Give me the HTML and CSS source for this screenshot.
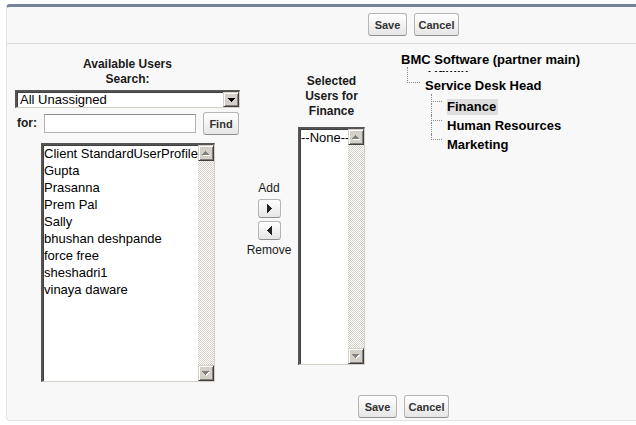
FILE: index.html
```html
<!DOCTYPE html>
<html>
<head>
<meta charset="utf-8">
<link rel="stylesheet" href="styles.css">
</head>
<body>
<div class="panel">
  <div class="bar bar--top">
    <button class="btn btn--save">Save</button>
    <button class="btn btn--cancel">Cancel</button>
  </div>

  <div class="main">
    <div class="col col--available">
      <div class="heading">Available Users<br>Search:</div>
      <div class="select inset">
        <span class="select__text">All Unassigned</span>
        <span class="sb-btn"><svg width="7" height="4" viewBox="0 0 7 4"><path d="M0 0h7v1h-1v1h-1v1h-1v1H3V3H2V2H1V1H0z" fill="#000"/></svg></span>
      </div>
      <div class="find-row">
        <span class="heading find-row__label">for:</span>
        <input class="text-input" type="text">
        <button class="btn btn--find">Find</button>
      </div>
      <div class="listbox listbox--available inset">
        <div class="listbox__items">
          <div class="listbox__item">Client StandardUserProfile</div>
          <div class="listbox__item">Gupta</div>
          <div class="listbox__item">Prasanna</div>
          <div class="listbox__item">Prem Pal</div>
          <div class="listbox__item">Sally</div>
          <div class="listbox__item">bhushan deshpande</div>
          <div class="listbox__item">force free</div>
          <div class="listbox__item">sheshadri1</div>
          <div class="listbox__item">vinaya daware</div>
        </div>
        <div class="scrollbar">
          <span class="sb-btn"><svg width="8" height="5" viewBox="0 0 8 5"><path transform="translate(1 1)" d="M3 0h1v1h1v1h1v1h1v1H0V3h1V2h1V1h1z" fill="#fff"/><path d="M3 0h1v1h1v1h1v1h1v1H0V3h1V2h1V1h1z" fill="#808080"/></svg></span>
          <span class="scrollbar__track"></span>
          <span class="sb-btn"><svg width="8" height="5" viewBox="0 0 8 5"><path transform="translate(1 1)" d="M0 0h7v1h-1v1h-1v1h-1v1H3V3H2V2H1V1H0z" fill="#fff"/><path d="M0 0h7v1h-1v1h-1v1h-1v1H3V3H2V2H1V1H0z" fill="#808080"/></svg></span>
        </div>
      </div>
    </div>

    <div class="col col--move">
      <div class="move-label">Add</div>
      <button class="btn btn--arrow"><svg width="5" height="9" viewBox="0 0 5 9"><path d="M0 0h1v1h1v1h1v1h1v1h1v1H4v1H3v1H2v1H1v1H0z" fill="#222"/></svg></button>
      <button class="btn btn--arrow"><svg width="5" height="9" viewBox="0 0 5 9"><path d="M5 0v9H4V8H3V7H2V6H1V5H0V4h1V3h1V2h1V1h1V0z" fill="#222"/></svg></button>
      <div class="move-label">Remove</div>
    </div>

    <div class="col col--selected">
      <div class="heading">Selected Users for Finance</div>
      <div class="listbox listbox--selected inset">
        <div class="listbox__items">
          <div class="listbox__item">--None--</div>
        </div>
        <div class="scrollbar">
          <span class="sb-btn"><svg width="8" height="5" viewBox="0 0 8 5"><path transform="translate(1 1)" d="M3 0h1v1h1v1h1v1h1v1H0V3h1V2h1V1h1z" fill="#fff"/><path d="M3 0h1v1h1v1h1v1h1v1H0V3h1V2h1V1h1z" fill="#808080"/></svg></span>
          <span class="scrollbar__track"></span>
          <span class="sb-btn"><svg width="8" height="5" viewBox="0 0 8 5"><path transform="translate(1 1)" d="M0 0h7v1h-1v1h-1v1h-1v1H3V3H2V2H1V1H0z" fill="#fff"/><path d="M0 0h7v1h-1v1h-1v1h-1v1H3V3H2V2H1V1H0z" fill="#808080"/></svg></span>
        </div>
      </div>
    </div>

    <div class="col col--tree">
      <ul class="tree">
        <li class="tree__root">
          <span class="tree__label tree__label--root">BMC Software (partner main)</span>
          <ul class="tree__children tree__children--l1">
            <li class="tree__ghost"><span class="tree__ghost-text">Admin</span></li>
            <li class="tree__node tree__node--l1">
              <span class="tree__label tree__label--l1">Service Desk Head</span>
              <ul class="tree__children tree__children--l2">
                <li class="tree__node tree__node--l2"><span class="tree__label tree__label--selected">Finance</span></li>
                <li class="tree__node tree__node--l2"><span class="tree__label">Human Resources</span></li>
                <li class="tree__node tree__node--l2"><span class="tree__label">Marketing</span></li>
              </ul>
            </li>
          </ul>
        </li>
      </ul>
    </div>
  </div>

  <div class="bar bar--bottom">
    <button class="btn btn--save">Save</button>
    <button class="btn btn--cancel">Cancel</button>
  </div>
</div>
</body>
</html>
```

FILE: styles.css
```css
html, body {
  margin: 0;
  padding: 0;
  background: #fff;
  overflow: hidden;
}

body {
  font-family: "Liberation Sans", Arial, sans-serif;
  font-size: 12px;
  color: #222;
}

.panel {
  margin: 4px 0 0 6px;
  width: 815px;
  background: #f8f8f8;
  border: 1px solid #e0e3e5;
  border-top: 3px solid #77839a;
  border-radius: 4px;
}

/* button bars */
.bar {
  display: flex;
  gap: 7px;
}

.bar--top {
  height: 37px;
  box-sizing: border-box;
  padding: 6px 0 0 361px;
  border-bottom: 1px solid #dbdbdb;
}

.bar--bottom {
  padding: 6px 0 2px 351px;
}

.btn {
  box-sizing: border-box;
  height: 23px;
  padding: 0 3px;
  font-family: "Liberation Sans", Arial, sans-serif;
  font-size: 11px;
  font-weight: bold;
  color: #333;
  background: linear-gradient(to bottom, #ffffff 0%, #f4f4f4 45%, #e6e6e6 100%);
  border: 1px solid #b5b5b5;
  border-bottom-color: #8f8f8f;
  border-radius: 3px;
  display: flex;
  align-items: center;
  justify-content: center;
}

.btn--save { width: 39px; }
.btn--cancel { width: 45px; }
.btn--find { width: 36px; }

.btn--arrow {
  width: 23px;
  height: 19px;
  padding: 0;
}

/* main layout */
.main {
  display: flex;
  padding-top: 6px;
}

.col {
  display: flex;
  flex-direction: column;
}

.heading {
  font-weight: bold;
  font-size: 12px;
  line-height: 15px;
  text-align: center;
  color: #1a1a1a;
}

.col--available {
  width: 225px;
  margin-left: 8px;
  padding: 7px 0;
}

.col--move {
  width: 58px;
  align-self: center;
  align-items: center;
  gap: 3px;
}

.move-label {
  line-height: 15px;
  font-size: 12px;
  color: #1a1a1a;
}

.col--selected {
  width: 67px;
  align-self: center;
}

.col--tree {
  align-self: flex-start;
  padding-left: 36px;
}

/* classic sunken border */
.inset {
  box-sizing: border-box;
  background: #fff;
  border-style: solid;
  border-width: 2px 1px 1px 2px;
  border-color: #555 #d4d0c8 #d4d0c8 #555;
  box-shadow: inset 1px 1px 0 #404040;
}

.select {
  margin-top: 3px;
  height: 18px;
  display: flex;
  align-items: stretch;
}

.select__text {
  flex: 1;
  padding-left: 3px;
  font-size: 13px;
  line-height: 15px;
  color: #000;
}

.find-row {
  margin-top: 4px;
  padding-left: 2px;
  display: flex;
  align-items: center;
  gap: 7px;
}

.find-row__label {
  width: 20px;
  text-align: left;
}

.text-input {
  box-sizing: border-box;
  width: 152px;
  height: 19px;
  margin: 0;
  padding: 0 2px;
  background: #fff;
  border: 1px solid #b3b3b3;
  border-top-color: #8e8e8e;
  font-family: "Liberation Sans", Arial, sans-serif;
  font-size: 13px;
}

/* list boxes */
.listbox {
  display: flex;
}

.listbox--available {
  width: 174px;
  height: 239px;
  margin: 8px 0 0 26px;
}

.listbox--selected {
  width: 67px;
  height: 238px;
  margin-top: 8px;
}

.listbox__items {
  flex: 1;
  min-width: 0;
  padding-left: 1px;
  overflow: hidden;
}

.listbox__item {
  font-size: 13px;
  line-height: 17px;
  color: #000;
  white-space: nowrap;
}

.scrollbar {
  width: 16px;
  display: flex;
  flex-direction: column;
}

.scrollbar__track {
  flex: 1;
  background: repeating-conic-gradient(#d4d0c8 0 25%, #ffffff 0 50%) 0 0 / 2px 2px;
}

.sb-btn {
  box-sizing: border-box;
  width: 16px;
  height: 16px;
  flex: none;
  display: flex;
  align-items: center;
  justify-content: center;
  background: #d4d0c8;
  border: 1px solid;
  border-color: #d4d0c8 #404040 #404040 #d4d0c8;
  box-shadow: inset 1px 1px 0 #fff, inset -1px -1px 0 #808080;
}

.select .sb-btn {
  height: 15px;
}

/* tree */
.tree,
.tree__children {
  list-style: none;
  margin: 0;
  padding: 0;
}

.tree {
  font-family: "Liberation Sans", Arial, sans-serif;
  font-weight: bold;
  font-size: 13px;
  color: #000;
  white-space: nowrap;
}

.tree__label {
  display: inline-block;
  line-height: 16px;
  vertical-align: middle;
}

.tree__label--root,
.tree__label--l1 {
  display: block;
  line-height: 20px;
}

.tree__label--selected {
  background: #dedede;
  padding-right: 2px;
}

.tree__children--l1 {
  margin-left: 6px;
}

.tree__ghost {
  height: 2px;
  margin: 1px 0 3px;
  overflow: hidden;
  padding-left: 21px;
}

.tree__ghost-text {
  display: block;
  height: 20px;
  line-height: 20px;
  transform: translateY(-13px);
}

.tree__node {
  position: relative;
}

.tree__node::before {
  content: "";
  position: absolute;
  left: 0;
  border-left: 1px dotted #8a8a8a;
  border-bottom: 1px dotted #8a8a8a;
}

.tree__node:not(:last-child)::after {
  content: "";
  position: absolute;
  left: 0;
  top: 7px;
  bottom: 0;
  border-left: 1px dotted #8a8a8a;
}

.tree__node--l1 {
  padding-left: 18px;
}

.tree__node--l1::before {
  top: -9px;
  height: 15px;
  width: 12px;
}

.tree__children--l2 {
  margin-left: 6px;
}

.tree__node--l2 {
  padding-left: 16px;
  height: 19px;
  line-height: 19px;
}

.tree__node--l2::before {
  top: 0;
  height: 5px;
  width: 10px;
}

.tree__node--l2:first-child::before {
  top: -2px;
  height: 7px;
}
```
